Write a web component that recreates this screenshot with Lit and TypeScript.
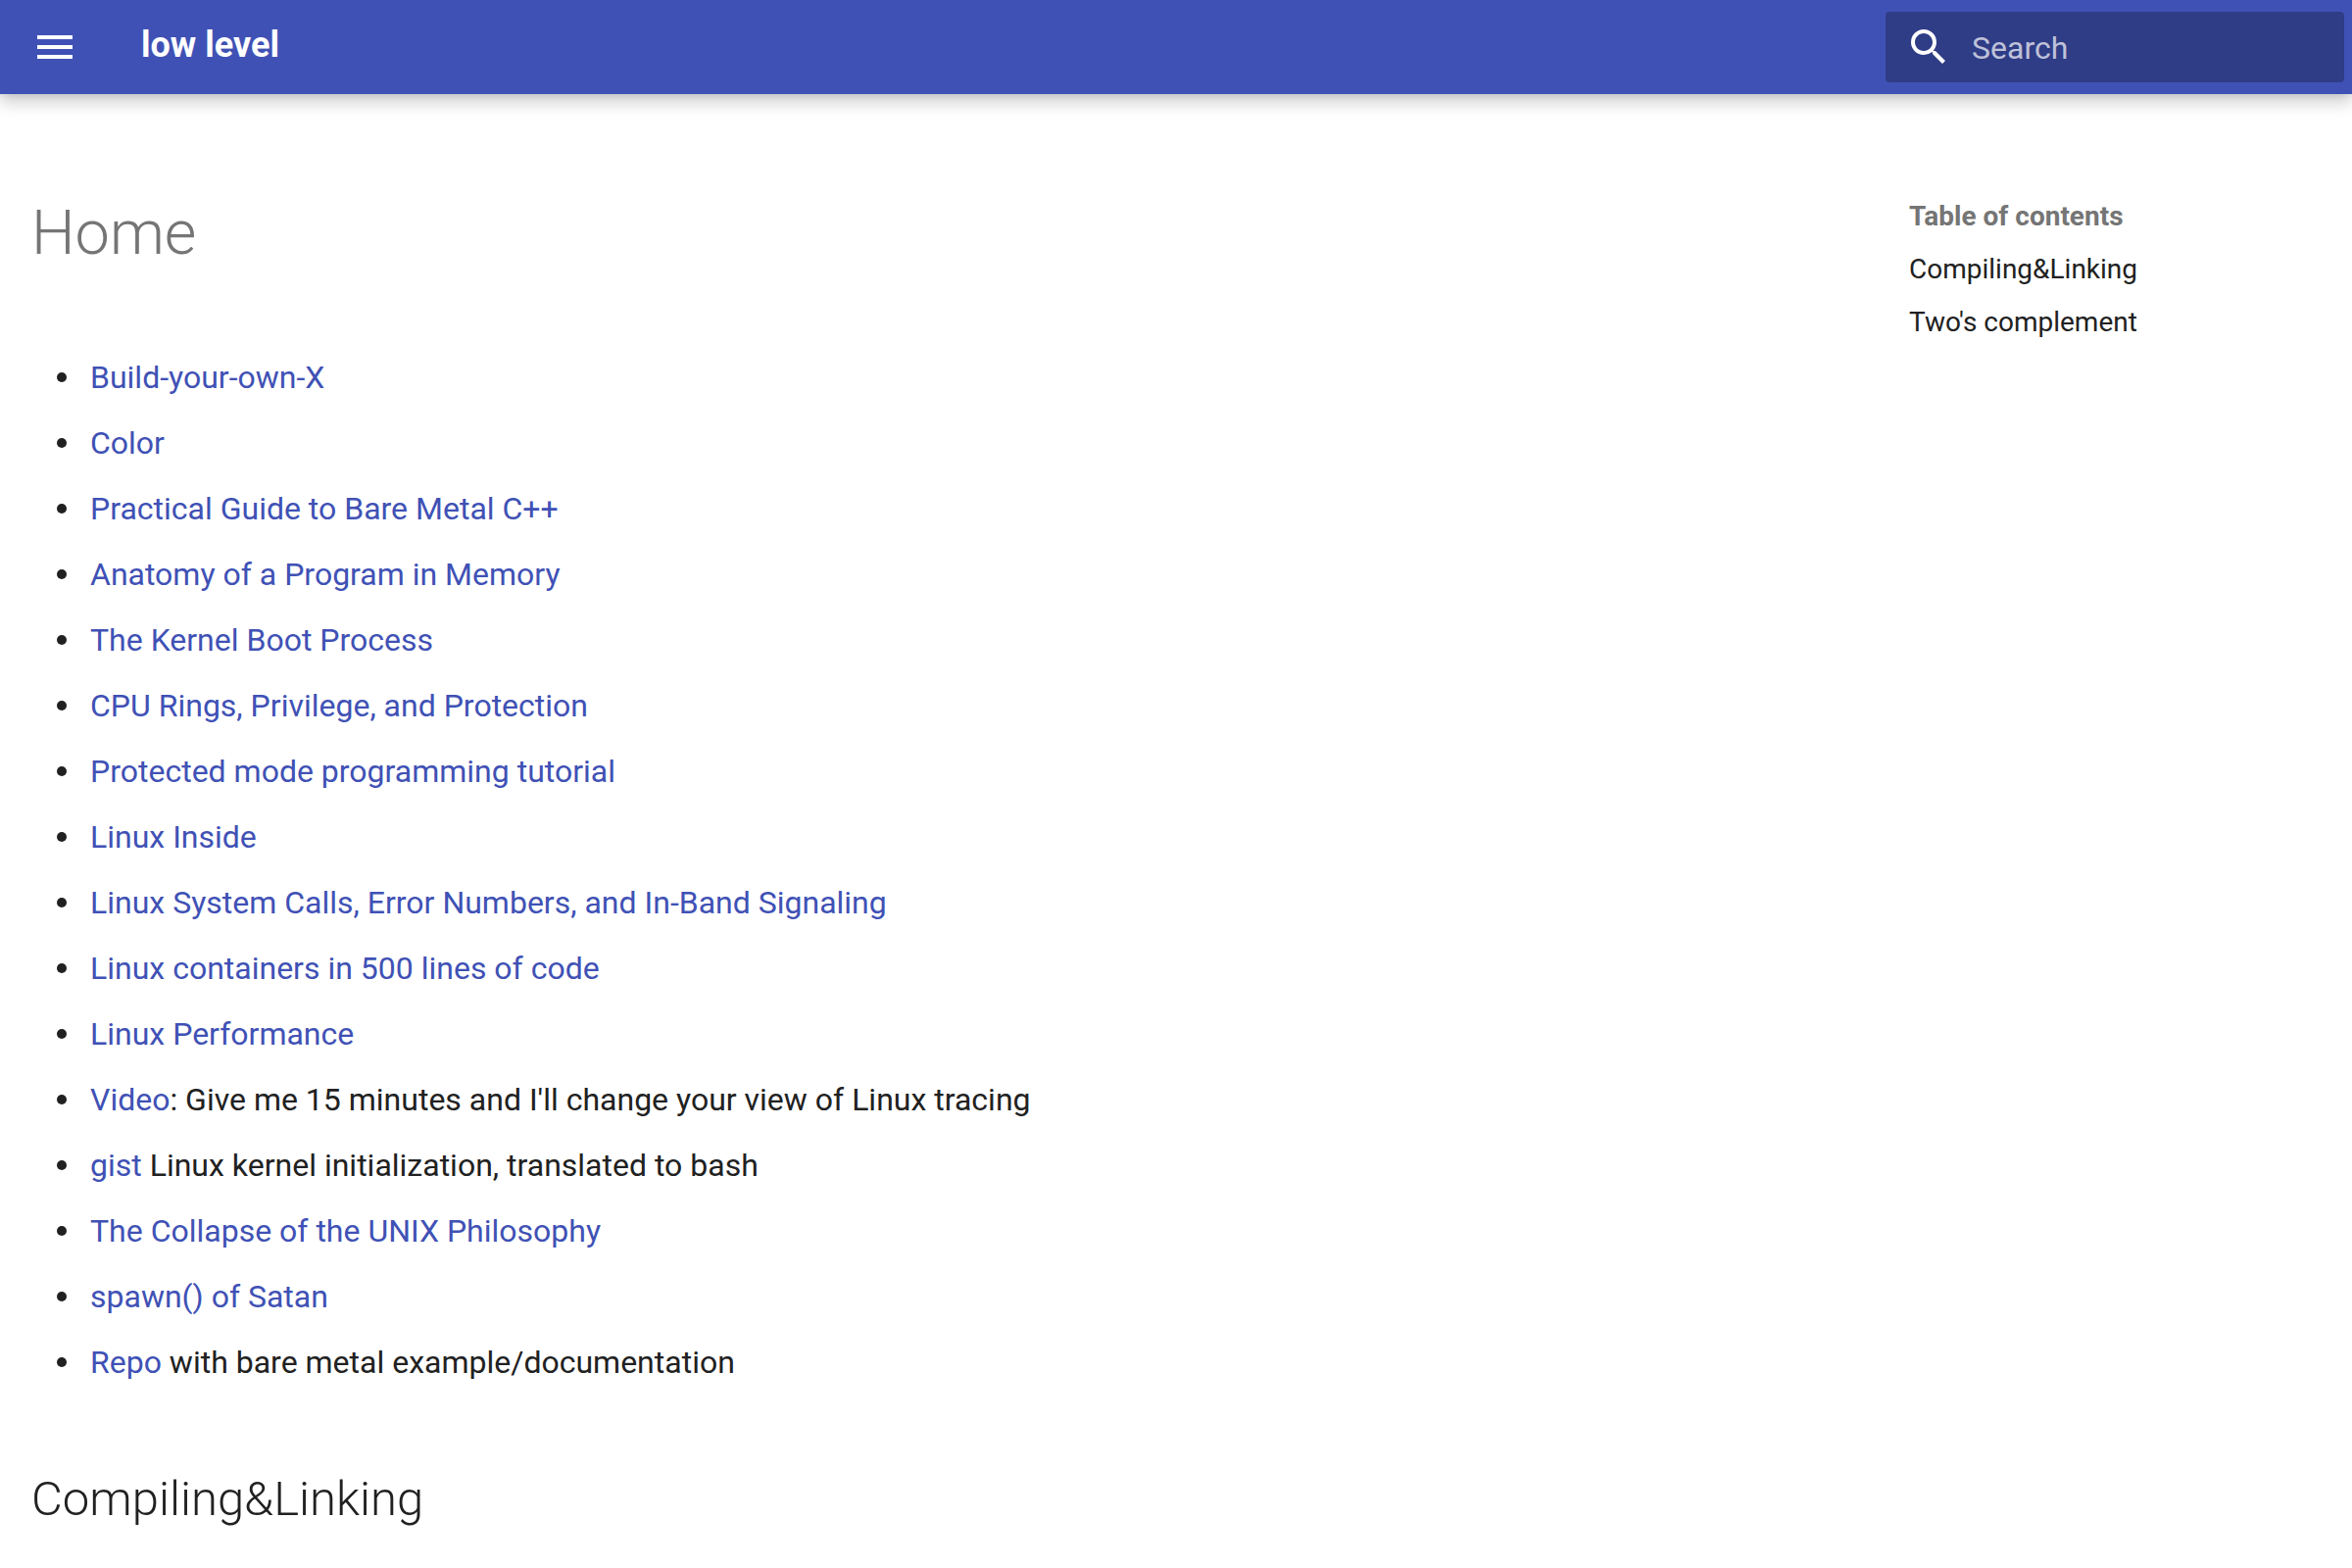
import { LitElement, html, css } from "lit";
import { customElement } from "lit/decorators.js";

interface Entry {
  link: string;
  rest?: string;
}

const ENTRIES: Entry[] = [
  { link: "Build-your-own-X" },
  { link: "Color" },
  { link: "Practical Guide to Bare Metal C++" },
  { link: "Anatomy of a Program in Memory" },
  { link: "The Kernel Boot Process" },
  { link: "CPU Rings, Privilege, and Protection" },
  { link: "Protected mode programming tutorial" },
  { link: "Linux Inside" },
  { link: "Linux System Calls, Error Numbers, and In-Band Signaling" },
  { link: "Linux containers in 500 lines of code" },
  { link: "Linux Performance" },
  { link: "Video", rest: ": Give me 15 minutes and I'll change your view of Linux tracing" },
  { link: "gist", rest: " Linux kernel initialization, translated to bash" },
  { link: "The Collapse of the UNIX Philosophy" },
  { link: "spawn() of Satan" },
  { link: "Repo", rest: " with bare metal example/documentation" },
];

@customElement("site-header")
export class SiteHeader extends LitElement {
  static styles = css`
    :host {
      display: block;
      position: sticky;
      top: 0;
      z-index: 1;
      background: #4051b5;
      color: #fff;
      box-shadow: 0 0 8px rgba(0, 0, 0, 0.1), 0 8px 16px rgba(0, 0, 0, 0.2);
    }
    .bar {
      display: flex;
      align-items: center;
      height: 96px;
      padding: 0 8px 0 32px;
    }
    .menu {
      display: flex;
      padding: 0;
      border: 0;
      background: none;
      color: inherit;
      cursor: pointer;
    }
    .icon {
      display: block;
      flex: none;
      width: 48px;
      height: 48px;
      fill: currentColor;
    }
    .title {
      flex: 1;
      padding: 0 64px 4px;
      font-size: 36px;
      line-height: 48px;
      font-weight: 700;
    }
    .title a {
      color: inherit;
      text-decoration: none;
    }
    .search {
      display: flex;
      align-items: center;
      gap: 20px;
      box-sizing: border-box;
      width: 468px;
      height: 72px;
      padding: 0 20px;
      border-radius: 4px;
      background: rgba(0, 0, 0, 0.26);
    }
    .query {
      flex: 1;
      box-sizing: border-box;
      min-width: 0;
      height: 72px;
      padding: 2px 0 0;
      border: 0;
      outline: 0;
      background: none;
      color: inherit;
      font: inherit;
      font-size: 32px;
    }
    .query::placeholder {
      color: rgba(255, 255, 255, 0.7);
    }
  `;

  render() {
    return html`
      <header class="bar">
        <button class="menu" type="button" aria-label="Navigation">
          <svg class="icon" viewBox="0 0 24 24" aria-hidden="true">
            <path d="M3 6h18v2H3V6m0 5h18v2H3v-2m0 5h18v2H3v-2Z" />
          </svg>
        </button>
        <div class="title"><a href="#home">low level</a></div>
        <label class="search">
          <svg class="icon" viewBox="0 0 24 24" aria-hidden="true">
            <path
              d="M9.500 3A6.500 6.500 0 0 1 16 9.500c0 1.610-.590 3.090-1.560 4.230l.270.270h.790l5 5-1.500 1.500-5-5v-.790l-.270-.270A6.516 6.516 0 0 1 9.500 16 6.500 6.500 0 0 1 3 9.500 6.500 6.500 0 0 1 9.500 3m0 2C7 5 5 7 5 9.500S7 14 9.500 14 14 12 14 9.500 12 5 9.500 5Z"
            />
          </svg>
          <input class="query" type="text" placeholder="Search" aria-label="Search" />
        </label>
      </header>
    `;
  }
}

@customElement("page-toc")
export class PageToc extends LitElement {
  static styles = css`
    :host {
      display: block;
      font-size: 28px;
      line-height: 36px;
    }
    .toc {
      display: flex;
      flex-direction: column;
      gap: 18px;
    }
    .label {
      margin: 0;
      font-size: inherit;
      font-weight: 700;
      color: #757575;
    }
    .items {
      display: flex;
      flex-direction: column;
      gap: 18px;
      margin: 0;
      padding: 0;
      list-style: none;
    }
    .items a {
      color: inherit;
      text-decoration: none;
    }
  `;

  render() {
    return html`
      <nav class="toc" aria-label="Table of contents">
        <h2 class="label">Table of contents</h2>
        <ul class="items">
          <li><a href="#compiling-linking">Compiling&amp;Linking</a></li>
          <li><a href="#twos-complement">Two's complement</a></li>
        </ul>
      </nav>
    `;
  }
}

@customElement("app-root")
export class AppRoot extends LitElement {
  static styles = css`
    :host {
      display: block;
      min-height: 100vh;
      background: #fff;
      color: #212121;
      font-family: Roboto, "Liberation Sans", sans-serif;
      font-size: 32px;
      line-height: 51px;
      -webkit-font-smoothing: antialiased;
    }
    .main {
      display: flex;
      align-items: flex-start;
      padding-top: 100px;
    }
    .content {
      flex: 1;
      min-width: 0;
      padding: 0 32px;
    }
    .side {
      flex: none;
      box-sizing: border-box;
      width: 484px;
      padding: 7px 32px;
    }
    .heading {
      margin: 0 0 81px;
      color: #757575;
      font-size: 63px;
      line-height: 83px;
      font-weight: 300;
    }
    .subheading {
      margin: 79px 0 0;
      font-size: 49px;
      line-height: 70px;
      font-weight: 300;
    }
    .links {
      display: flex;
      flex-direction: column;
      gap: 16px;
      margin: 0;
      padding: 0 0 0 60px;
      list-style: none;
    }
    .links li::before {
      content: "";
      display: inline-block;
      width: 10px;
      height: 10px;
      margin: 0 24px 0 -34px;
      border-radius: 50%;
      background: currentColor;
      vertical-align: 6px;
    }
    .links a {
      color: #4051b5;
      text-decoration: none;
    }
  `;

  render() {
    return html`
      <site-header></site-header>
      <main class="main">
        <article class="content">
          <h1 class="heading" id="home">Home</h1>
          <ul class="links">
            ${ENTRIES.map((e) => html`<li><a href="#home">${e.link}</a>${e.rest ?? ""}</li>`)}
          </ul>
          <h2 class="subheading" id="compiling-linking">Compiling&amp;Linking</h2>
        </article>
        <aside class="side"><page-toc></page-toc></aside>
      </main>
    `;
  }
}
